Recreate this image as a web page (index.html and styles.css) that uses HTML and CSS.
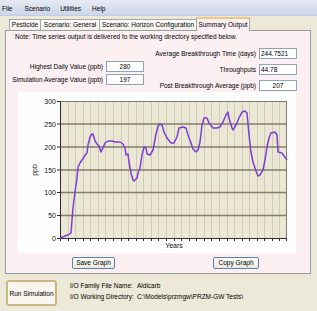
FILE: index.html
```html
<!DOCTYPE html>
<html>
<head>
<meta charset="utf-8">
<link rel="stylesheet" href="styles.css">
</head>
<body>
<div class="menubar">
  <span class="m-file">File</span>
  <span class="m-scen">Scenario</span>
  <span class="m-util">Utilities</span>
  <span class="m-help">Help</span>
</div>
<div class="tabrow">
  <div class="tab t1">Pesticide</div>
  <div class="tab t2">Scenario: General</div>
  <div class="tab t3">Scenario: Horizon Configuration</div>
  <div class="tab active">Summary Output</div>
</div>
<div class="panel">
  <div class="note">Note: Time series output is delivered to the working directory specified below.</div>
  <div class="fields">
    <div class="col left">
      <div class="field"><span class="lbl">Highest Daily Value (ppb)</span><span class="box c">280</span></div>
      <div class="field"><span class="lbl">Simulation Average Value (ppb)</span><span class="box c">197</span></div>
    </div>
    <div class="col right">
      <div class="field"><span class="lbl">Average Breakthrough Time (days)</span><span class="box l">244.7521</span></div>
      <div class="field"><span class="lbl">Throughputs</span><span class="box l">44.78</span></div>
      <div class="field"><span class="lbl">Post Breakthrough Average (ppb)</span><span class="box c">207</span></div>
    </div>
  </div>
  <div class="chart">
    <svg class="graph" width="278" height="161" viewBox="18 92 278 161">
      <rect x="60" y="101" width="227" height="137" fill="#ebe7d5"/>
      <path stroke="#d2cbb5" stroke-width="1" fill="none" d="M68.5 101V238M75.5 101V238M83.5 101V238M90.5 101V238M98.5 101V238M105.5 101V238M113.5 101V238M121.5 101V238M128.5 101V238M136.5 101V238M143.5 101V238M151.5 101V238M158.5 101V238M166.5 101V238M174.5 101V238M181.5 101V238M189.5 101V238M196.5 101V238M204.5 101V238M211.5 101V238M219.5 101V238M227.5 101V238M234.5 101V238M242.5 101V238M249.5 101V238M257.5 101V238M264.5 101V238M272.5 101V238M279.5 101V238"/>
      <path stroke="#857b67" stroke-width="1.4" fill="none" d="M60 124H287M60 147H287M60 170H287M60 192.5H287M60 215.5H287"/>
      <path stroke="#7d7a70" stroke-width="1" fill="none" d="M60 101.5H286.5V238"/>
      <path stroke="#2e2e2e" stroke-width="1" fill="none" d="M60.5 101V238.5H287"/>
      <path stroke="#2e2e2e" stroke-width="1" fill="none" d="M57 101.5h3M57 124h3M57 147h3M57 170h3M57 192.5h3M57 215.5h3M57 238.5h3M60.5 238v3M68.5 238v3M75.5 238v3M83.5 238v3M90.5 238v3M98.5 238v3M105.5 238v3M113.5 238v3M121.5 238v3M128.5 238v3M136.5 238v3M143.5 238v3M151.5 238v3M158.5 238v3M166.5 238v3M174.5 238v3M181.5 238v3M189.5 238v3M196.5 238v3M204.5 238v3M211.5 238v3M219.5 238v3M227.5 238v3M234.5 238v3M242.5 238v3M249.5 238v3M257.5 238v3M264.5 238v3M272.5 238v3M279.5 238v3M286.5 238v3"/>
      <g class="ylab" text-anchor="end">
        <text x="56" y="104">300</text>
        <text x="56" y="126.5">250</text>
        <text x="56" y="149.5">200</text>
        <text x="56" y="172.5">150</text>
        <text x="56" y="195">100</text>
        <text x="56" y="218">50</text>
        <text x="56" y="241">0</text>
      </g>
      <text class="axtitle" x="0" y="0" text-anchor="middle" transform="translate(37 170) rotate(-90)">ppb</text>
      <text class="axtitle" x="174" y="247.5" text-anchor="middle">Years</text>
      <polyline fill="none" stroke="#7a3fd4" stroke-width="1.5" stroke-linejoin="round" points="60,238 65,236 68,235 71,233 72,220 73,208 74,200 75,192 77,178 78,167 80,163 82,160 84,157 86,154 87,153 88,145 90,137 92,134 93,134 95,141 97,144 99,146 101,152 103,148 105,143 108,141 112,141 115,142 120,142 123,144 125,148 126,155 128,154 129,162 131,173 133,180 134,181 137,178 138,173 140,168 142,155 144,147 146,148 147,154 150,155 153,150 154,145 156,134 158,126 160,124 162,125 164,132 167,138 171,143 174,143 177,137 179,128 183,127 186,128 188,135 191,143 193,149 196,152 198,150 200,142 202,125 204,118 207,118 209,123 213,128 217,128 220,127 223,122 226,115 228,112 229,118 232,128 233,130 236,125 239,118 242,112 245,111 247,113 249,135 251,152 253,162 256,171 258,176 260,175 263,170 265,160 267,147 269,138 271,133 275,132 277,135 278,152 282,153 284,156 287,160"/>
    </svg>
  </div>
  <div class="btns">
    <button class="gbtn save">Save Graph</button>
    <button class="gbtn copy">Copy Graph</button>
  </div>
</div>
<div class="footer">
  <button class="run">Run Simulation</button>
  <div class="io">
    <span>I/O Family File Name:</span><span>Aldicarb</span>
    <span>I/O Working Directory:</span><span>C:\Models\przmgw\PRZM-GW Tests\</span>
  </div>
</div>
</body>
</html>
```
FILE: styles.css
```css
* { box-sizing: border-box; }
html, body {
  margin: 0;
  padding: 0;
}
body {
  width: 317px;
  height: 311px;
  overflow: hidden;
  background: #ece9d8;
  font-family: "Liberation Sans", Arial, sans-serif;
  font-size: 6.5px;
  color: #000;
}
.menubar {
  height: 16px;
  display: flex;
  align-items: center;
  padding-top: 3px;
  background: linear-gradient(#e6eaf3, #ccd6ea);
  border-bottom: 1px solid #c2cde4;
}
.menubar span { line-height: 10px; }
.m-file { margin-left: 2px; }
.m-scen { margin-left: 12px; }
.m-util { margin-left: 10px; }
.m-help { margin-left: 11px; }

.tabrow {
  height: 14px;
  display: flex;
  align-items: flex-end;
  padding-left: 9px;
}
.tab {
  height: 11px;
  border: 1px solid #a4a9a8;
  border-bottom: none;
  background: linear-gradient(#ffffff, #f1efe6);
  text-align: center;
  line-height: 10px;
  white-space: nowrap;
}
.t1 { width: 32px; }
.t2 { width: 60px; margin-left: -1px; }
.t3 { width: 98px; margin-left: -1px; }
.tab.active {
  width: 54px;
  height: 14px;
  margin-left: -1px;
  margin-bottom: -1px;
  position: relative;
  z-index: 1;
  background: #fdf0f4;
  border-top: 2px solid #f2c77a;
  line-height: 11px;
}

.panel {
  margin: 0 6px 0 5px;
  height: 244px;
  border: 1px solid #9aa0a0;
  background: #fcf0f3;
  padding-right: 13px;
}
.note {
  line-height: 10px;
  margin-top: 1px;
  padding-left: 9px;
  white-space: nowrap;
}
.fields {
  display: flex;
  margin-top: 5px;
  padding-top: 1px;
  height: 45px;
}
.col { display: flex; flex-direction: column; }
.left { width: 138px; margin-top: 13px; gap: 2px; }
.right { margin-left: auto; gap: 5px; }
.field {
  display: flex;
  justify-content: flex-end;
  align-items: center;
  height: 11px;
  white-space: nowrap;
}
.lbl { margin-right: 3px; }
.box {
  width: 38px;
  height: 11px;
  background: #fff;
  border: 1px solid #8fa3ba;
  line-height: 9px;
}
.box.c { text-align: center; }
.box.l { text-align: left; padding-left: 1px; }

.chart {
  margin-left: 12px;
  width: 278px;
  height: 161px;
  background: #fffefe;
}
.graph { display: block; }
.ylab, .axtitle {
  font-family: "Liberation Sans", Arial, sans-serif;
  font-size: 7px;
  fill: #111;
}

.btns {
  display: flex;
  margin-top: 4px;
  padding-left: 66px;
}
.gbtn {
  height: 12px;
  padding: 0;
  font-family: "Liberation Sans", Arial, sans-serif;
  font-size: 6.5px;
  color: #000;
  border: 1px solid #5f7fa6;
  border-radius: 2px;
  background: linear-gradient(#ffffff, #eae8df);
  line-height: 10px;
}
.save { width: 43px; }
.copy { width: 46px; margin-left: 98px; }

.footer {
  display: flex;
  align-items: flex-start;
  margin-top: 6px;
  padding-left: 6px;
}
.run {
  width: 51px;
  height: 26px;
  padding: 0;
  font-family: "Liberation Sans", Arial, sans-serif;
  font-size: 6.5px;
  color: #000;
  border: 2px solid #c8b782;
  border-radius: 3px;
  background: #f7f5ee;
}
.io {
  margin-left: 13px;
  display: grid;
  grid-template-columns: 67px auto;
  line-height: 11px;
  white-space: nowrap;
}
```
